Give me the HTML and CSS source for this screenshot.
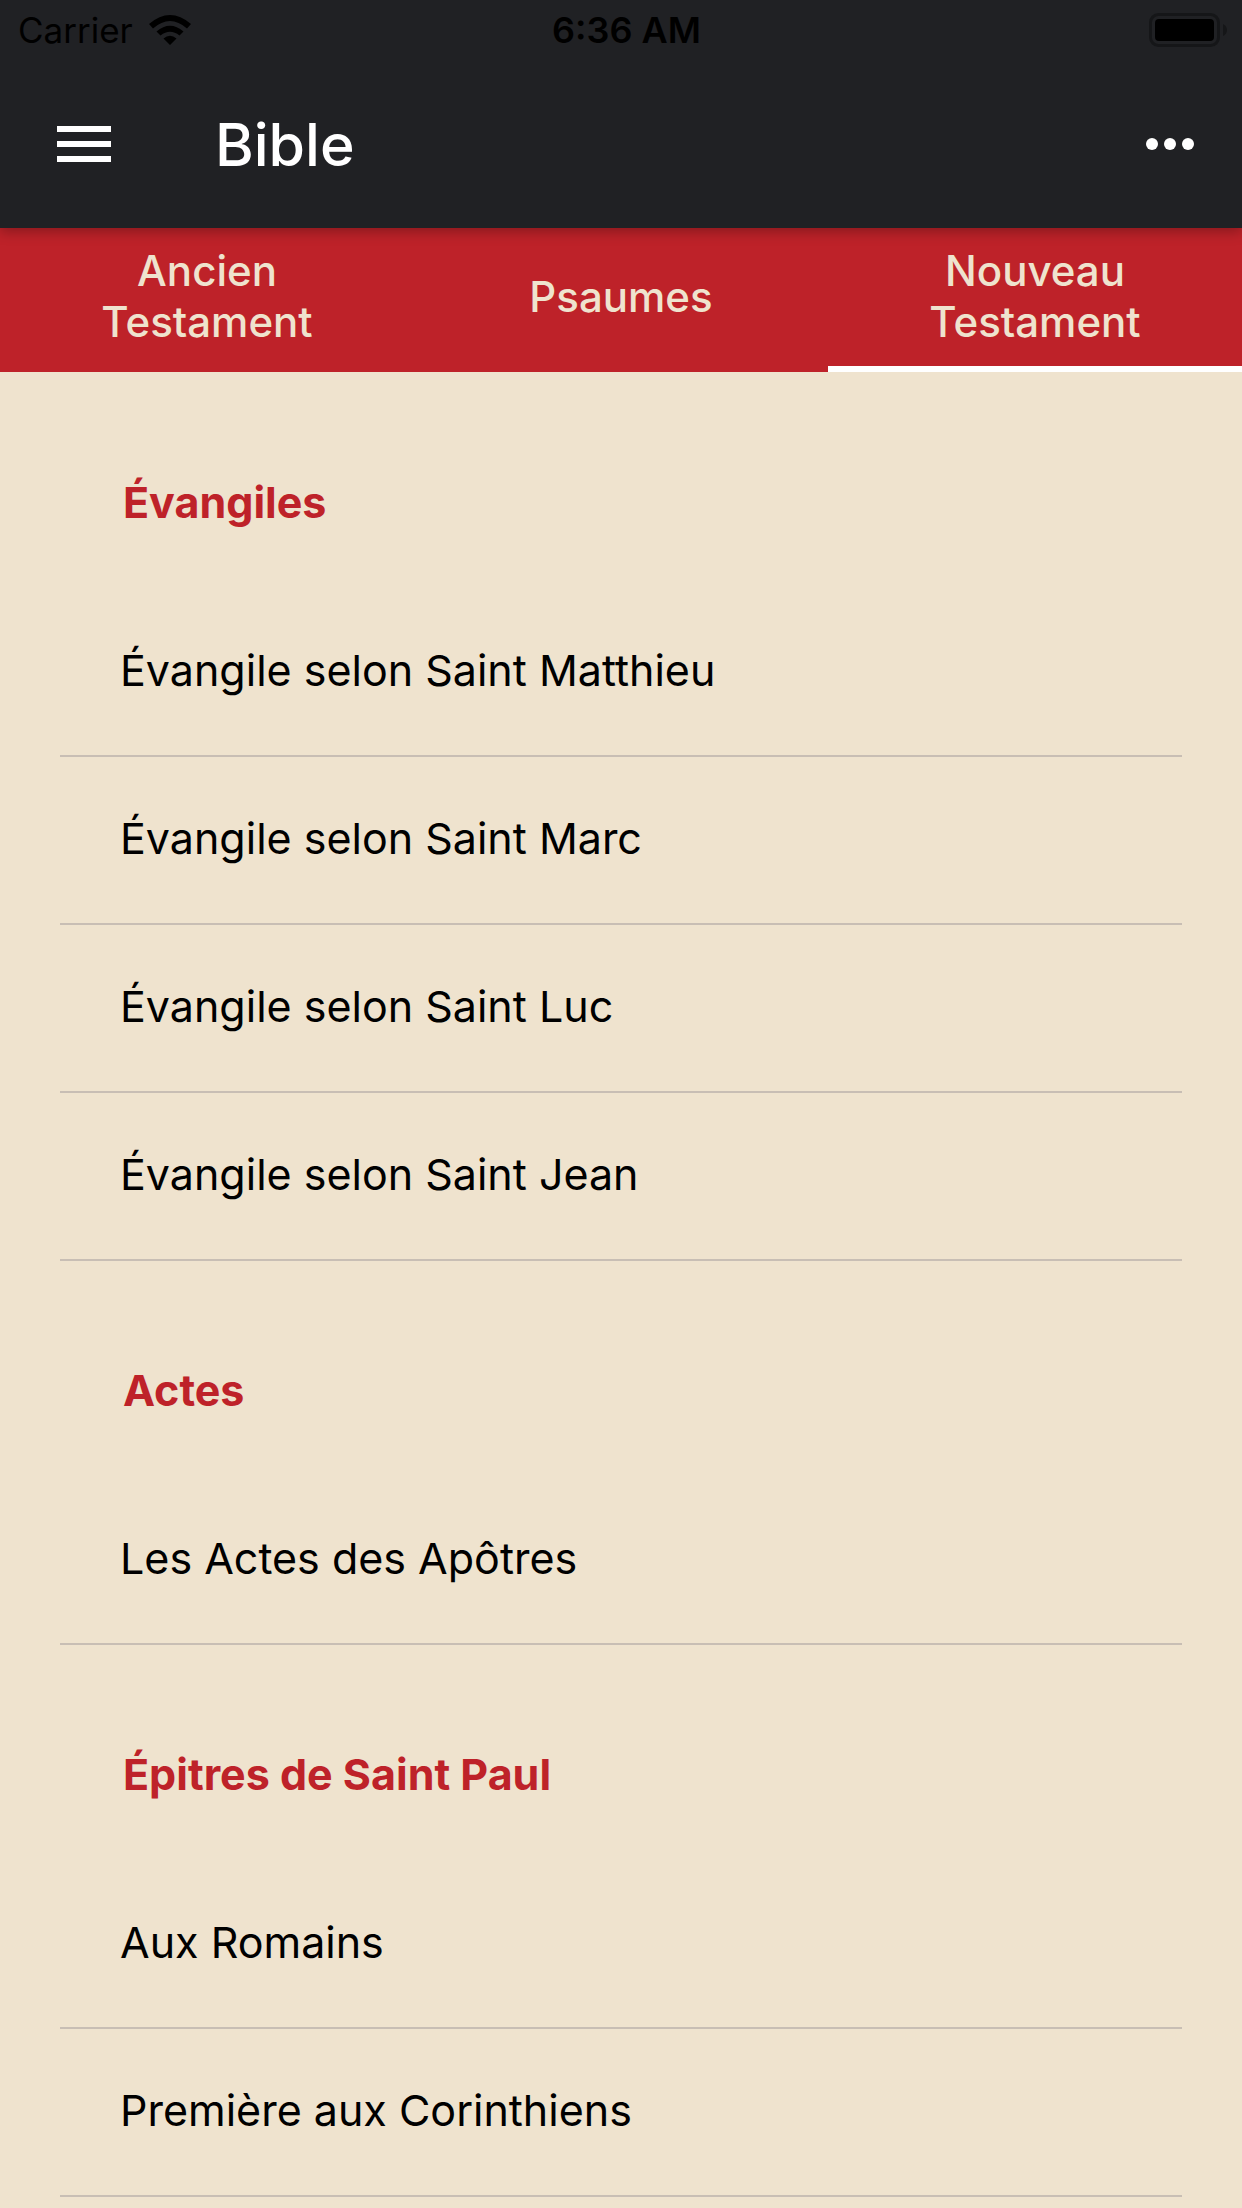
FILE: index.html
```html
<!DOCTYPE html>
<html lang="fr">
<head>
<meta charset="utf-8">
<meta name="viewport" content="width=device-width, initial-scale=1">
<title>Bible</title>
<link rel="stylesheet" href="styles.css">
</head>
<body>
<header class="top">
  <div class="status">
    <div class="carrier"><span>Carrier</span>
      <svg class="wifi" viewBox="0 0 42 30" aria-hidden="true"><path d="M0 9Q21-9 42 9L38 13.500Q21-1.500 4 13.500zM7.500 16.500Q21 5 34.500 16.500L30.500 20.500Q21 13 11.500 20.500zM14.500 23.500Q21 18 27.500 23.500L21 30z"/></svg>
    </div>
    <span class="clock">6:36 AM</span>
    <svg class="battery" viewBox="0 0 78 34" aria-hidden="true"><rect x="1.500" y="1.500" width="68" height="31" rx="8" fill="none" stroke="#151618" stroke-width="3"/><rect x="6" y="6" width="59" height="22" rx="4"/><path d="M74 11q4 2 4 6t-4 6z" fill="#151618"/></svg>
  </div>
  <div class="toolbar">
    <button class="icon-button" aria-label="Menu"><svg width="54" height="36" viewBox="0 0 54 36"><path d="M0 0h54v6H0zM0 15h54v6H0zM0 30h54v6H0z"/></svg></button>
    <h1>Bible</h1>
    <button class="icon-button" aria-label="Options"><svg width="48" height="12" viewBox="0 0 48 12"><circle cx="6" cy="6" r="6"/><circle cx="24" cy="6" r="6"/><circle cx="42" cy="6" r="6"/></svg></button>
  </div>
</header>
<nav class="tabs">
  <a href="#ancien">Ancien<br>Testament</a>
  <a href="#psaumes">Psaumes</a>
  <a href="#nouveau" class="active" aria-current="page">Nouveau<br>Testament</a>
</nav>
<main class="books" id="nouveau">
  <section>
    <h2>Évangiles</h2>
    <ul>
      <li><a href="#matthieu">Évangile selon Saint Matthieu</a></li>
      <li><a href="#marc">Évangile selon Saint Marc</a></li>
      <li><a href="#luc">Évangile selon Saint Luc</a></li>
      <li><a href="#jean">Évangile selon Saint Jean</a></li>
    </ul>
  </section>
  <section>
    <h2>Actes</h2>
    <ul>
      <li><a href="#actes">Les Actes des Apôtres</a></li>
    </ul>
  </section>
  <section>
    <h2>Épitres de Saint Paul</h2>
    <ul>
      <li><a href="#romains">Aux Romains</a></li>
      <li><a href="#corinthiens">Première aux Corinthiens</a></li>
    </ul>
  </section>
</main>
</body>
</html>
```
FILE: styles.css
```css
* { box-sizing: border-box; }
body { margin: 0; background: #efe3ce; font-family: Inter, "Liberation Sans", sans-serif; font-size: 43px; color: #000; }
a { color: inherit; text-decoration: none; }
.top { position: relative; background: #202124; box-shadow: 0 4px 12px rgba(0, 0, 0, .28); }
.status { display: grid; grid-template-columns: 1fr auto 1fr; align-items: center; height: 60px; padding: 0 15px 0 18px; font-size: 36px; }
.carrier { display: flex; align-items: center; gap: 16px; font-size: 35px; }
.wifi { width: 42px; height: 30px; }
.clock { padding-left: 8px; font-weight: 600; }
.battery { width: 78px; height: 34px; justify-self: end; }
.toolbar { display: flex; align-items: center; height: 168px; padding: 0 48px 0 57px; color: #fff; }
.toolbar h1 { flex: 1; margin: 0 0 0 104px; font-size: 59px; font-weight: 500; }
.icon-button { display: flex; padding: 0; border: 0; background: none; fill: #fff; }
.tabs { display: grid; grid-template-columns: repeat(3, 1fr); min-height: 144px; background: #be2229; color: #efe3ce; font-size: 42px; line-height: 51px; text-align: center; }
.tabs a { display: flex; align-items: center; justify-content: center; padding-bottom: 2px; border-bottom: 6px solid transparent; font-weight: 500; }
.tabs .active { border-color: #fff; }
.books { padding: 49px 60px 0; }
.books h2 { display: flex; align-items: center; height: 168px; margin: 0; padding: 0 0 6px 63px; font-size: 43px; font-weight: 700; color: #be2229; }
.books section + section { padding-top: 48px; }
.books ul { margin: 0; padding: 0; list-style: none; }
.books li { height: 168px; border-bottom: 2px solid #c8beb4; }
.books li a { display: flex; align-items: center; height: 100%; padding: 0 0 4px 60px; }
```
